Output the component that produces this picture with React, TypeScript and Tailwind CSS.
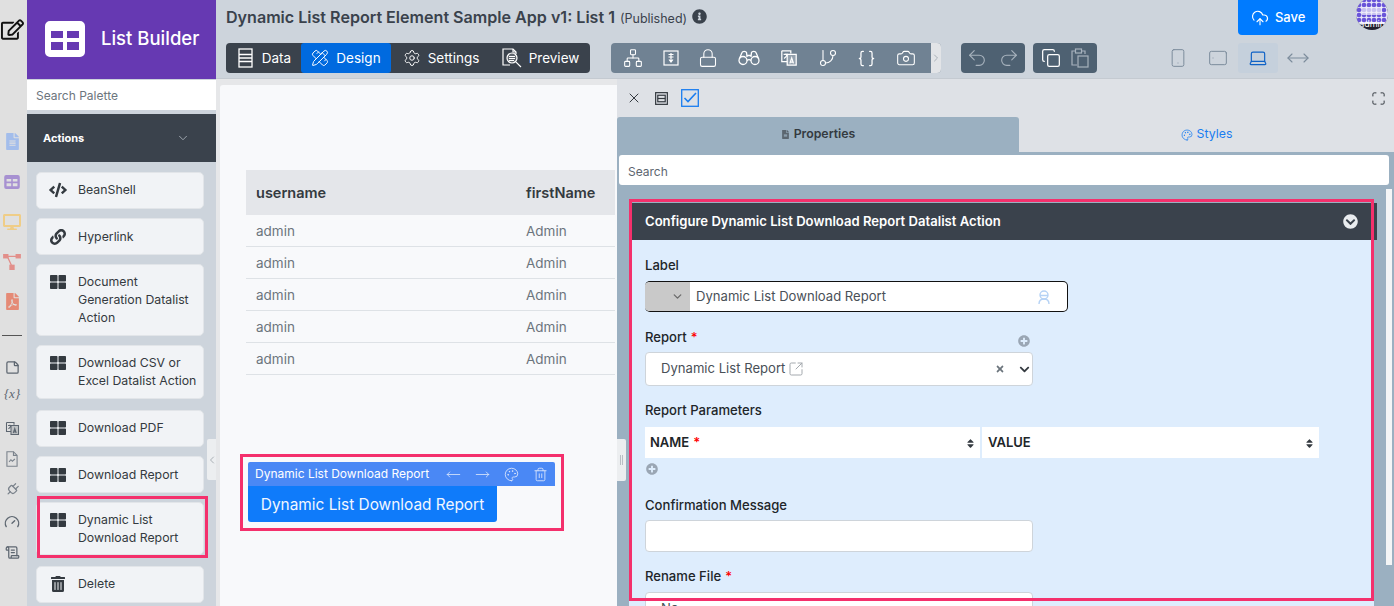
import React from "react"
import {
  Braces,
  Camera,
  ChevronDown,
  ChevronLeft,
  ChevronRight,
  CloudUpload,
  Copy,
  Gauge,
  GitBranch,
  Laptop,
  Lock,
  Maximize,
  MoveHorizontal,
  MoveLeft,
  MoveRight,
  Network,
  Palette,
  PencilRuler,
  Plug,
  Redo2,
  ScrollText,
  Settings,
  Smartphone,
  SquareArrowOutUpRight,
  StickyNote,
  Tablet,
  Trash2,
  Undo2,
  X,
} from "lucide-react"
import {
  FaChevronCircleDown,
  FaChevronDown,
  FaCode,
  FaDesktop,
  FaFileAlt,
  FaFilePdf,
  FaInfoCircle,
  FaLink,
  FaPlusCircle,
  FaRegEdit,
  FaSort,
  FaThLarge,
  FaTimes,
  FaTrashAlt,
} from "react-icons/fa"

type IconProps = { className?: string }

const TableIcon = ({ className }: IconProps) => (
  <svg viewBox="0 0 40 36" className={className} fill="currentColor">
    <path d="M5 0h30a5 5 0 0 1 5 5v26a5 5 0 0 1-5 5H5a5 5 0 0 1-5-5V5a5 5 0 0 1 5-5Zm1 10v7h12v-7H6Zm16 0v7h12v-7H22ZM6 21v8h12v-8H6Zm16 0v8h12v-8H22Z" fillRule="evenodd" />
  </svg>
)

const TranslateIcon = ({ className }: IconProps) => (
  <svg viewBox="0 0 20 20" className={className} fill="none" stroke="currentColor" strokeWidth="1.4">
    <path d="M2 2h10v3M8 14H2V2" />
    <path d="M8 6h10v12H8z" fill="currentColor" fillOpacity=".25" />
    <path d="M4 6h5M6.500 5v1M8 6c-.5 2-2 3.500-3.500 4.500M11 16l2-6 2 6M11.800 14.500h2.400" />
  </svg>
)

const FileChartIcon = ({ className }: IconProps) => (
  <svg viewBox="0 0 18 22" className={className} fill="none" stroke="currentColor" strokeWidth="1.5">
    <path d="M2 1h9l5 5v15H2z" />
    <path d="M11 1v5h5M5 15l2.500-3 2 2 3.500-3" />
  </svg>
)

const WorkflowIcon = ({ className }: IconProps) => (
  <svg viewBox="0 0 20 18" className={className} fill="currentColor">
    <rect x="0" y="0" width="6" height="5" />
    <rect x="14" y="0" width="6" height="5" />
    <rect x="7" y="12" width="6" height="6" />
    <path d="M5 2h10v1.500H5zM4.500 4l1.200-.8L10 12.500l-1.200.7z" />
  </svg>
)

const DataIcon = ({ className }: IconProps) => (
  <svg viewBox="0 0 15 20" className={className} fill="none" stroke="currentColor" strokeWidth="1.300">
    <rect x="1" y="1" width="13" height="18" />
    <path d="M1 6.500h13M1 10h13M1 13.500h13" />
  </svg>
)

const PreviewIcon = ({ className }: IconProps) => (
  <svg viewBox="0 0 20 20" className={className} fill="none" stroke="currentColor" strokeWidth="1.200">
    <path d="M14 6V4l-3-3H1v16h7" />
    <path d="M11 1v3h3" />
    <circle cx="10" cy="10" r="5" fill="currentColor" fillOpacity=".2" />
    <path d="M7 8.500h6M7 10.500h6M7 12.500h5M13.800 13.800 19 19" />
  </svg>
)

const ColumnIcon = ({ className }: IconProps) => (
  <svg viewBox="0 0 16 16" className={className} fill="none" stroke="currentColor" strokeWidth="1.200">
    <rect x="1" y="1" width="14" height="14" />
    <path d="M8 3v9M5.500 4.500h5M5.500 7h5M6 9.500l2 2.500 2-2.500" />
  </svg>
)

const BinocularsIcon = ({ className }: IconProps) => (
  <svg viewBox="0 0 22 16" className={className} fill="none" stroke="currentColor" strokeWidth="1.300">
    <circle cx="5" cy="10.500" r="4" />
    <circle cx="17" cy="10.500" r="4" />
    <path d="M9 10.500c1.200-1 2.800-1 4 0M1.300 9 4 2.500C4.500 1 8 1 8.500 2.500L9 7M20.700 9 18 2.500C17.500 1 14 1 13.500 2.500L13 7M9 5.500h4" />
  </svg>
)

const PasteIcon = ({ className }: IconProps) => (
  <svg viewBox="0 0 18 20" className={className} fill="none" stroke="currentColor" strokeWidth="1.200">
    <path d="M6 17H1V3h3M11 3h3v3" />
    <rect x="4.500" y="1" width="6" height="4" />
    <rect x="7" y="8" width="10" height="11" />
  </svg>
)

const WindowIcon = ({ className }: IconProps) => (
  <svg viewBox="0 0 14 14" className={className} fill="none" stroke="currentColor" strokeWidth="1.300">
    <rect x=".7" y=".7" width="12.600" height="12.600" />
    <rect x="3" y="3.500" width="8" height="7" />
    <path d="M3 7h8" />
  </svg>
)

const CheckBoxIcon = ({ className }: IconProps) => (
  <svg viewBox="0 0 18 18" className={className} fill="none" stroke="currentColor" strokeWidth="1.300">
    <rect x=".7" y=".7" width="16.600" height="16.600" />
    <path d="m3.500 9 3.500 3.500L15 4" strokeWidth="1.600" />
  </svg>
)

const AgentIcon = ({ className }: IconProps) => (
  <svg viewBox="0 0 14 15" className={className} fill="none" stroke="currentColor" strokeWidth="1.400">
    <circle cx="7" cy="5" r="4" />
    <path d="M3 5.500h8M2 14c0-3 2-5 5-5s5 2 5 5" />
  </svg>
)

const Avatar = () => (
  <div className="relative h-8 w-8 overflow-hidden rounded-full bg-[#22202e]">
    <svg viewBox="0 0 32 26" className="h-[26px] w-8">
      <rect width="32" height="26" fill="#e6e4f6" />
      {[3, 8, 13, 18, 23, 28].map(x =>
        [2, 7, 12, 17, 22].map(y => <circle key={`${x}-${y}`} cx={x} cy={y} r="2.300" fill="#6a55d8" />)
      )}
      <rect x="6" y="9" width="20" height="8" fill="#f2f1fb" opacity=".7" />
    </svg>
    <span className="absolute inset-x-0 bottom-[1px] text-center text-[9px] leading-[10px] text-white">admin</span>
  </div>
)

const paletteItems = [
  { label: ["BeanShell"], icon: FaCode, box: "h-[37px] pt-[8px]" },
  { label: ["Hyperlink"], icon: FaLink, box: "h-[37px] pt-[9px]" },
  { label: ["Document", "Generation Datalist", "Action"], icon: FaThLarge, box: "h-[72px] pt-[8px]" },
  { label: ["Download CSV or", "Excel Datalist Action"], icon: FaThLarge, box: "h-[54px] pt-[8px]" },
  { label: ["Download PDF"], icon: FaThLarge, box: "mt-[2px] h-[37px] pt-[8px]" },
  { label: ["Download Report"], icon: FaThLarge, box: "h-[37px] pt-[9px]" },
  { label: ["Dynamic List", "Download Report"], icon: FaThLarge, box: "h-[53px] pt-[8px]", marked: true },
  { label: ["Delete"], icon: FaTrashAlt, box: "mt-[2px] h-[37px] pt-[8px]" },
]

const users = ["admin", "admin", "admin", "admin", "admin"]

const LeftRail = () => (
  <div className="flex w-[27px] shrink-0 flex-col items-center bg-[#e0e0e0] pr-[3px]">
    <FaRegEdit className="mt-[19px] h-[21px] w-[23px] shrink-0 text-[#111]" />
    <FaFileAlt className="mt-[93px] h-[17px] w-[13px] shrink-0 text-[#a3bdeb]" />
    <TableIcon className="mt-[25px] h-[14px] w-4 shrink-0 text-[#a791d1]" />
    <FaDesktop className="mt-[25px] h-[16px] w-[18px] shrink-0 text-[#efcd87]" />
    <WorkflowIcon className="mt-[24px] h-[16px] w-[20px] shrink-0 text-[#e28f8a]" />
    <FaFilePdf className="mt-[23px] h-[17px] w-[13px] shrink-0 text-[#e58a76]" />
    <div className="mt-[25px] h-px w-5 shrink-0 bg-[#555]" />
    <StickyNote className="mt-[24px] h-[15px] w-[15px] shrink-0 text-[#5d6670]" />
    <span className="mt-[11px] font-['Liberation_Serif',serif] text-[13px] leading-[16px] text-[#5d6670] italic">{"{x}"}</span>
    <TranslateIcon className="mt-[19px] h-[15px] w-[15px] shrink-0 text-[#5d6670]" />
    <FileChartIcon className="mt-[15px] h-[16px] w-[14px] shrink-0 text-[#7b838c]" />
    <Plug className="mt-[15px] h-[15px] w-[15px] shrink-0 rotate-45 text-[#7b838c]" />
    <Gauge className="mt-[17px] h-[16px] w-[16px] shrink-0 text-[#5d6670]" />
    <ScrollText className="mt-[14px] h-[17px] w-[15px] shrink-0 text-[#5d6670]" />
  </div>
)

const Sidebar = () => (
  <div className="relative flex w-[189px] shrink-0 flex-col bg-[#cdd4dc]">
    <div className="flex h-[79px] shrink-0 items-center bg-[#6639b2] pb-[2px] pl-[18px] text-white">
      <TableIcon className="h-[36px] w-10" />
      <span className="ml-4 text-[18.500px] font-medium">List Builder</span>
    </div>
    <div className="mt-px flex h-[30px] shrink-0 items-center bg-white pt-[2px] pl-[9px] text-[12px] text-[#6c757d]">Search Palette</div>
    <div className="mt-[4px] flex h-[48px] shrink-0 items-center justify-between bg-[#3a424c] pr-[26px] pl-4 text-[11px] font-bold text-white">
      Actions
      <ChevronDown className="h-[14px] w-[14px] text-[#aab2ba]" strokeWidth={1.5} />
    </div>
    <div className="mt-[10px] flex flex-col gap-[9px] pl-[9px]">
      {paletteItems.map(item => {
        const Icon = item.icon
        return (
          <div
            key={item.label[0]}
            className={`relative flex w-[168px] shrink-0 items-start rounded-[5px] border border-[#e2e5e9] bg-[#f1f3f6] pl-[12px] text-[12.300px] leading-[18px] text-[#343a40] ${item.box}`}
          >
            <Icon className="mt-[1px] h-[16px] w-[18px] shrink-0 text-[#343a40]" />
            <div className="ml-[11px] whitespace-nowrap">
              {item.label.map(line => (
                <div key={line}>{line}</div>
              ))}
            </div>
            {item.marked && (
              <div className="absolute top-[-7px] right-[-5px] bottom-[-4px] left-0 border-[3px] border-[#f4306c]" />
            )}
          </div>
        )
      })}
    </div>
    <div className="absolute top-[439px] right-0 flex h-[41px] w-[9px] items-center justify-center rounded-l-[2px] bg-[#eceef0]">
      <ChevronLeft className="h-3 w-3 shrink-0 text-[#aab0b6]" />
    </div>
  </div>
)

const TopBar = () => (
  <div className="h-[79px] shrink-0 border-b border-[#c4cad1] bg-[#cdd4dc] pl-[10px]">
    <div className="flex h-[35px] items-start">
      <span className="mt-[8px] text-[16.080px] leading-[18px] font-semibold whitespace-nowrap text-[#3a424c]">
        Dynamic List Report Element Sample App v1: List 1
      </span>
      <span className="mt-[10px] ml-[5px] text-[12.500px] leading-[17px] whitespace-nowrap text-[#3a424c]">(Published)</span>
      <FaInfoCircle className="mt-[9px] ml-[5px] h-[15px] w-[15px] text-[#3a424c]" />
      <button className="ml-[531px] flex h-[35px] w-[80px] items-center justify-center gap-[6px] rounded-b-[4px] bg-[#007bff] text-[13px] font-medium text-white">
        <CloudUpload className="h-[18px] w-[18px]" strokeWidth={1.5} />
        Save
      </button>
      <div className="mt-[-2px] ml-[38px]">
        <Avatar />
      </div>
    </div>
    <div className="mt-[8px] flex h-[30px] items-center">
      <div className="flex h-full w-[364px] items-center rounded-[4px] bg-[#3a424c] text-[13.500px] text-white">
        <div className="flex h-full w-[75px] items-center justify-center gap-[9px] pl-[2px]">
          <DataIcon className="h-[20px] w-[15px]" />
          Data
        </div>
        <div className="flex h-full w-[90px] items-center justify-center gap-[7px] rounded-[3px] bg-[#006adf]">
          <PencilRuler className="h-[18px] w-[18px]" strokeWidth={1.3} />
          Design
        </div>
        <div className="flex h-full w-[100px] items-center justify-center gap-[7px]">
          <Settings className="h-[18px] w-[18px]" strokeWidth={1.3} />
          Settings
        </div>
        <div className="flex h-full w-[99px] items-center justify-center gap-[7px]">
          <PreviewIcon className="h-[20px] w-[20px]" />
          Preview
        </div>
      </div>
      <div className="ml-[21px] flex h-full w-[330px] items-center overflow-hidden rounded-[4px] bg-[#708293] text-white">
        <div className="flex flex-1 items-center justify-around pr-[5px] pl-[2px]">
          <Network className="h-5 w-5" strokeWidth={1.3} />
          <ColumnIcon className="h-[16px] w-[16px]" />
          <Lock className="h-5 w-5" strokeWidth={1.3} />
          <BinocularsIcon className="h-[16px] w-[22px]" />
          <TranslateIcon className="h-[18px] w-[18px]" />
          <GitBranch className="h-5 w-5" strokeWidth={1.3} />
          <Braces className="h-[19px] w-[19px]" strokeWidth={1.6} />
          <Camera className="h-5 w-5" strokeWidth={1.3} />
        </div>
        <div className="flex h-full w-[10px] items-center justify-center bg-[#e2e4e7]">
          <ChevronRight className="h-3 w-3 shrink-0 text-[#a9b0b7]" />
        </div>
      </div>
      <div className="ml-[20px] flex h-full w-[64px] items-center justify-around rounded-[4px] bg-[#4e6172] text-[#a7b2bd]">
        <Undo2 className="h-[22px] w-[22px]" strokeWidth={1.2} />
        <Redo2 className="h-[22px] w-[22px]" strokeWidth={1.2} />
      </div>
      <div className="ml-[8px] flex h-full w-[64px] items-center justify-around rounded-[4px] bg-[#4e6172] px-[3px]">
        <Copy className="h-5 w-5 text-white" strokeWidth={1.5} />
        <PasteIcon className="h-[20px] w-[18px] text-[#a7b2bd]" />
      </div>
      <div className="ml-[61px] flex h-full w-[80px] items-center justify-center text-[#7c8c9c]">
        <Smartphone className="h-[20px] w-[20px]" strokeWidth={1.2} />
        <Tablet className="ml-[20px] h-[20px] w-[20px] rotate-90" strokeWidth={1.2} />
      </div>
      <div className="flex h-full w-[40px] items-center justify-center rounded-[3px] bg-[#c5d0dc] text-[#0f62c6]">
        <Laptop className="h-[20px] w-[20px]" strokeWidth={1.4} />
      </div>
      <MoveHorizontal className="ml-[8px] h-[24px] w-[24px] text-[#7c8c9c]" strokeWidth={1.1} />
    </div>
  </div>
)

const Canvas = () => (
  <div className="flex w-[401px] shrink-0 flex-col bg-[#e6e7e9] pt-[6px] pl-[4px]">
    <div className="flex-1 overflow-hidden rounded-tl-[3px] bg-[#f8f9fb] pt-[85px] pl-[26px] text-[13.500px]">
      <div className="w-[369px]">
        <div className="flex h-[45px] items-center bg-[#e4e6ea] pl-[10px] text-[14.500px] font-semibold text-[#343a40]">
          <span className="w-[270px]">username</span>
          <span>firstName</span>
        </div>
        {users.map((u, i) => (
          <div key={i} className="flex h-[32px] items-center border-b border-[#dee2e6] pt-[1px] pl-[10px] text-[#6c757d]">
            <span className="w-[270px]">{u}</span>
            <span>Admin</span>
          </div>
        ))}
      </div>
      <div className="relative mt-[87px] w-[309px]">
        <div className="ml-[2px] flex h-[24px] w-[307px] items-center justify-between rounded-t-[2px] bg-[#4a88f5] pr-[7px] pl-[7px] text-[12px] text-white">
          <span className="whitespace-nowrap">Dynamic List Download Report</span>
          <div className="flex items-center gap-[14px] text-[#dbe6fb]">
            <MoveLeft className="h-[15px] w-[15px]" strokeWidth={1.3} />
            <MoveRight className="h-[15px] w-[15px]" strokeWidth={1.3} />
            <Palette className="h-[15px] w-[15px]" strokeWidth={1.4} />
            <Trash2 className="h-[15px] w-[15px]" strokeWidth={1.4} />
          </div>
        </div>
        <button className="ml-[2px] flex h-[36px] w-[249px] items-center justify-center rounded-b-[3px] bg-[#0f7bfa] pt-[1px] text-[15.400px] whitespace-nowrap text-[#f1f6ff]">
          Dynamic List Download Report
        </button>
        <div className="absolute top-[-8px] right-[-9px] bottom-[-9px] left-[-6px] border-[3px] border-[#f4306c]" />
      </div>
    </div>
  </div>
)

const FieldLabel = ({ children, required }: { children: React.ReactNode; required?: boolean }) => (
  <div className="text-[13.100px] leading-[16px] font-medium text-[#212529]">
    {children}
    {required && <span className="ml-[4px] text-[#f00]">*</span>}
  </div>
)

const Panel = () => (
  <div className="flex min-w-0 flex-1 flex-col bg-[#dee1e6]">
    <div className="flex h-[38px] shrink-0 items-center pr-[8px] pl-[9px]">
      <X className="h-[16px] w-[16px] text-[#343a40]" strokeWidth={1.5} />
      <WindowIcon className="ml-[13px] h-[13px] w-[13px] text-[#343a40]" />
      <CheckBoxIcon className="ml-[13px] h-[18px] w-[18px] text-[#1a7df0]" />
      <Maximize className="ml-auto h-[15px] w-[15px] text-[#343a40]" strokeWidth={1.6} />
    </div>
    <div className="flex h-[35px] shrink-0 text-[12.300px]">
      <div className="flex w-[402px] items-center justify-center gap-[4px] rounded-t-[3px] bg-[#9bb0c1] font-semibold text-[#343a40]">
        <FaFileAlt className="h-[9px] w-[9px] text-[#5b6670]" />
        Properties
      </div>
      <div className="flex flex-1 items-center justify-center gap-[4px] text-[#1a7df0]">
        <Palette className="h-[12px] w-[12px]" strokeWidth={1.5} />
        Styles
      </div>
    </div>
    <div className="relative flex-1 overflow-hidden bg-[#9bb0c1] pt-[3px] pl-[2px]">
      <div className="flex h-[30px] w-[770px] items-center rounded-[3px] bg-white pt-[3px] pl-[9px] text-[12px] text-[#5d6670]">Search</div>
      <div className="absolute top-[37px] right-[2px] h-[376px] w-[6px] bg-[#f4f5f6]" />
      <div className="relative mt-[18px] ml-[10px] w-[748px]">
        <div className="flex h-[37px] items-center justify-between bg-[#3a424c] pr-[19px] pl-[16px] text-[13.100px] font-semibold text-white">
          Configure Dynamic List Download Report Datalist Action
          <FaChevronCircleDown className="h-[15px] w-[15px] text-[#e9ecef]" />
        </div>
        <div className="h-[400px] w-[745px] bg-[#deedfd] pt-[17px] pl-[16px]">
          <FieldLabel>Label</FieldLabel>
          <div className="mt-[8px] flex h-[31px] w-[423px] overflow-hidden rounded-[5px] border-y-[1.500px] border-r-[1.500px] border-[#111] bg-white">
            <div className="flex w-[45px] items-center justify-end bg-[#c9c9c9] pr-[6px]">
              <ChevronDown className="h-[13px] w-[13px] text-[#6b6b6b]" strokeWidth={2.5} />
            </div>
            <div className="flex flex-1 items-center justify-between pt-[1px] pr-[16px] pl-[6px] text-[13.100px] text-[#495057]">
              Dynamic List Download Report
              <AgentIcon className="h-[15px] w-[14px] text-[#b5d2f5]" />
            </div>
          </div>
          <div className="mt-[17px] flex w-[388px] items-end justify-between">
            <FieldLabel required>Report</FieldLabel>
            <FaPlusCircle className="mr-[3px] mb-[-2px] h-[12px] w-[12px] text-[#9aa6b4]" />
          </div>
          <div className="mt-[7px] flex h-[34px] w-[388px] items-center rounded-[4px] border border-[#ced4da] bg-white pr-[2px] pl-[15px] text-[13.100px] text-[#495057]">
            Dynamic List Report
            <SquareArrowOutUpRight className="ml-[3px] h-[16px] w-[16px] text-[#a4a9ae]" strokeWidth={1.5} />
            <FaTimes className="ml-auto h-[10px] w-[10px] text-[#6c757d]" />
            <FaChevronDown className="ml-[14px] h-[11px] w-[11px] text-[#343a40]" />
          </div>
          <div className="mt-[16px]">
            <FieldLabel>Report Parameters</FieldLabel>
          </div>
          <div className="mt-[9px] flex h-[31px] w-[674px] gap-[2px] text-[13px] font-semibold text-[#212529]">
            <div className="flex w-[335px] items-center justify-between bg-white pt-[1px] pr-[4px] pl-[5px]">
              <span>
                NAME<span className="ml-[4px] text-[#f00]">*</span>
              </span>
              <FaSort className="h-[11px] w-[11px] text-[#343a40]" />
            </div>
            <div className="flex flex-1 items-center justify-between bg-white pt-[1px] pr-[4px] pl-[6px]">
              VALUE
              <FaSort className="h-[11px] w-[11px] text-[#343a40]" />
            </div>
          </div>
          <FaPlusCircle className="mt-[5px] ml-[1px] h-[12px] w-[12px] text-[#9aa6b4]" />
          <div className="mt-[22px]">
            <FieldLabel>Confirmation Message</FieldLabel>
          </div>
          <div className="mt-[7px] h-[32px] w-[388px] rounded-[4px] border border-[#ced4da] bg-white" />
          <div className="mt-[16px]">
            <FieldLabel required>Rename File</FieldLabel>
          </div>
          <div className="mt-[8px] h-[32px] w-[388px] rounded-[4px] border border-[#ced4da] bg-white pl-[15px] text-[13.100px] leading-[30px] text-[#495057]">
            No
          </div>
        </div>
        <div className="absolute top-[-4px] right-[3px] left-0 h-[402px] border-[3px] border-[#f4306c]" />
      </div>
      <div className="absolute top-[287px] left-0 flex h-[42px] w-[9px] items-center justify-center gap-px rounded-r-[2px] bg-[#eceef0]">
        <div className="h-[10px] w-px bg-[#b9bec4]" />
        <div className="h-[10px] w-px bg-[#b9bec4]" />
      </div>
    </div>
  </div>
)

export default function App() {
  return (
    <div className="flex h-[606px] w-[1394px] overflow-hidden bg-[#cdd4dc] [font-family:Inter,sans-serif]">
      <LeftRail />
      <Sidebar />
      <div className="flex min-w-0 flex-1 flex-col">
        <TopBar />
        <div className="flex min-h-0 flex-1">
          <Canvas />
          <Panel />
        </div>
      </div>
    </div>
  )
}
